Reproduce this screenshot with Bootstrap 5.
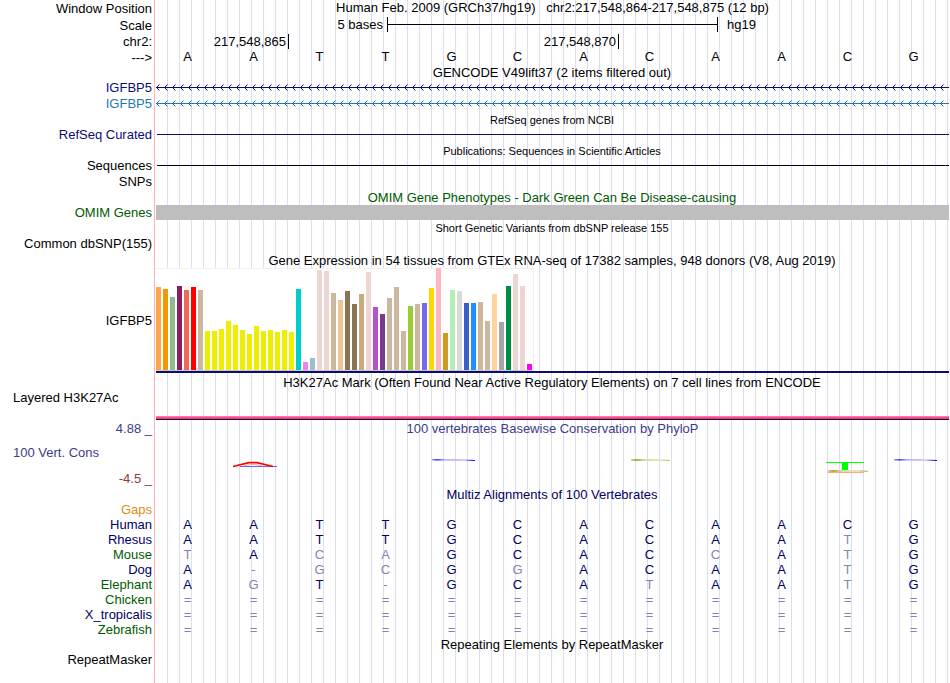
<!DOCTYPE html>
<html lang="en">
<head>
<meta charset="utf-8">
<meta name="viewport" content="width=device-width, initial-scale=1">
<title>Human chr2:217,548,864-217,548,875</title>
<link href="https://cdn.jsdelivr.net/npm/bootstrap@5.3.0/dist/css/bootstrap.min.css" rel="stylesheet">
<style>
  :root { --side: 155px; }
  body { font-family: "Liberation Sans", Arial, sans-serif; font-size: 13px; line-height: 16px; color: #000; background: #fff; }
  .browser {
    min-height: 100vh;
    padding-right: 1px;
    background:
      linear-gradient(#ffb4b4, #ffb4b4) 154px 0 / 1px 100% no-repeat,
      linear-gradient(#fff, #fff) 0 0 / 156px 100% no-repeat,
      repeating-linear-gradient(90deg, #dcdcf8 0 1px, transparent 1px 12px) 155px 0 / calc(100% - 155px) 100% no-repeat;
  }
  .track { display: flex; min-height: 16px; }
  .side { flex: 0 0 var(--side); padding-right: 3px; text-align: right; white-space: nowrap; }
  .side-start { text-align: left; padding-left: 13px; }
  .lane { flex: 1 1 0; min-width: 0; padding-left: 1px; }
  .lane svg { display: block; width: 100%; height: 16px; }
  .lane .logo { height: 50px; }
  .caption { margin-left: var(--side); text-align: center; white-space: nowrap; }
  .h14 { height: 14px; line-height: 14px; min-height: 0; }
  .h15 { height: 15px; line-height: 15px; min-height: 0; }
  .h17 { height: 17px; line-height: 17px; }
  .h18 { height: 18px; line-height: 20px; }
  .note { font-size: 11px; }
  .navy { color: #0c0c78; }
  .azure { color: #1f78b4; }
  .forest { color: #005a00; }
  .indigo { color: #3c3c8c; }
  .maroon { color: #8c3c3c; }
  .deep { color: #000064; }
  .amber { color: #e08a14; }
  .limits { gap: 10px; }
  .rule { height: 1px; margin: 6px 0 0 1px; background: currentColor; }
  .scale-start { width: 232px; padding-right: 4px; text-align: right; }
  .scale-bar { width: 331px; height: 15px; border: solid #000; border-width: 0 1px; background: linear-gradient(#000, #000) 0 7px / 100% 1px no-repeat; }
  .scale-end { padding-left: 9px; }
  .coord { height: 15px; padding-right: 2px; border-right: 1px solid #000; text-align: right; }
  .coord-a { width: 134px; }
  .coord-b { width: 330px; }
  .omim { background: #bebebe; }
  .plot { width: 378px; height: 103px; padding-bottom: 1px; gap: 2px; background: #fff; border-top: 1px solid #f0f0f0; border-right: 1px solid #f0f0f0; box-shadow: inset 0 -1px #c8c8c8; }
  .plot span { width: 5px; flex: none; }
  .gene-line { height: 2px; background: #0c0c78; }
  .acetyl { height: 4px; margin-top: 11px; background: linear-gradient(#ff78be 0 1px, #ff5078 1px 2px, #f04664 2px 3px, #140a50 3px 4px); }
  .bases { table-layout: fixed; width: calc(100% - 2px); border-collapse: collapse; line-height: 15px; }
  .bases th { width: var(--side); padding: 0 3px 0 0; text-align: right; font-weight: 400; height: 15px; }
  .bases td { padding: 0 1px 0 0; text-align: center; color: #000064; }
  .bases .diff { color: #8484b4; }
  .seq td { color: #000; line-height: 14px; vertical-align: top; }
</style>
</head>
<body>
<main class="browser">
  <div class="track h17"><div class="side">Window Position</div><div class="lane text-center h15">Human Feb. 2009 (GRCh37/hg19) &nbsp; chr2:217,548,864-217,548,875 (12 bp)</div></div>
  <div class="track h17"><div class="side">Scale</div>
    <div class="d-flex"><div class="scale-start h15">5 bases</div><div class="scale-bar"></div><div class="scale-end h15">hg19</div></div></div>
  <div class="track"><div class="side">chr2:</div>
    <div class="d-flex"><div class="coord coord-a">217,548,865</div><div class="coord coord-b">217,548,870</div></div></div>
  <table class="bases seq"><tbody><tr><th scope="row">---&gt;</th><td>A</td><td>A</td><td>T</td><td>T</td><td>G</td><td>C</td><td>A</td><td>C</td><td>A</td><td>A</td><td>C</td><td>G</td></tr></tbody></table>

  <div class="caption">GENCODE V49lift37 (2 items filtered out)</div>
  <div class="track"><div class="side h14"><a class="navy text-decoration-none" href="#igfbp5-a">IGFBP5</a></div>
    <div class="lane"><svg id="igfbp5-a" aria-hidden="true"><defs><pattern id="chev" width="8" height="16" patternUnits="userSpaceOnUse"><path d="M3.5 3.5L0.5 6.5L3.5 9.5" fill="none" stroke="#0c0c78"/></pattern></defs><rect width="100%" height="16" fill="url(#chev)"/><rect y="6" width="100%" height="1" fill="#0c0c78"/></svg></div></div>
  <div class="track"><div class="side h14"><a class="azure text-decoration-none" href="#igfbp5-b">IGFBP5</a></div>
    <div class="lane"><svg id="igfbp5-b" aria-hidden="true"><defs><pattern id="chev2" width="8" height="16" patternUnits="userSpaceOnUse"><path d="M3.5 3.5L0.5 6.5L3.5 9.5" fill="none" stroke="#1f78b4"/></pattern></defs><rect width="100%" height="16" fill="url(#chev2)"/><rect y="6" width="100%" height="1" fill="#1f78b4"/></svg></div></div>

  <div class="caption note h15">RefSeq genes from NCBI</div>
  <div class="track navy"><div class="side h14">RefSeq Curated</div><div class="lane"><div class="rule"></div></div></div>
  <div class="caption note h15">Publications: Sequences in Scientific Articles</div>
  <div class="track"><div class="side h14">Sequences</div><div class="lane"><div class="rule"></div></div></div>
  <div class="track"><div class="side h14">SNPs</div></div>

  <div class="caption forest h14">OMIM Gene Phenotypes - Dark Green Can Be Disease-causing</div>
  <div class="track forest h15"><div class="side">OMIM Genes</div><div class="lane"><div class="omim h15"></div></div></div>
  <div class="caption note h17">Short Genetic Variants from dbSNP release 155</div>
  <div class="track"><div class="side h14">Common dbSNP(155)</div></div>

  <div class="caption h15">Gene Expression in 54 tissues from GTEx RNA-seq of 17382 samples, 948 donors (V8, Aug 2019)</div>
  <div class="track"><div class="side align-self-center">IGFBP5</div>
    <div class="lane"><div class="plot d-flex align-items-end" id="gtex" role="img" aria-label="IGFBP5 expression by tissue"></div><div class="gene-line"></div></div></div>

  <div class="caption h18">H3K27Ac Mark (Often Found Near Active Regulatory Elements) on 7 cell lines from ENCODE</div>
  <div class="track h14"><div class="side side-start">Layered H3K27Ac</div></div>
  <div class="track"><div class="side"></div><div class="lane"><div class="acetyl"></div></div></div>

  <div class="track indigo"><div class="side">4.88 _</div><div class="lane text-center">100 vertebrates Basewise Conservation by PhyloP</div></div>
  <div class="track">
    <div class="side limits d-flex flex-column pt-2"><div class="indigo side-start">100 Vert. Cons</div><div class="maroon">-4.5 _</div></div>
    <div class="lane"><svg class="logo" aria-hidden="true">
      <defs>
        <linearGradient id="blueFade"><stop offset="0" stop-color="#a0a0fa"/><stop offset=".12" stop-color="#3c3cff"/><stop offset=".3" stop-color="#b4b4fa"/><stop offset=".75" stop-color="#c8c8fa"/><stop offset="1" stop-color="#00f"/></linearGradient>
        <linearGradient id="oliveFade"><stop offset="0" stop-color="#dcdc96"/><stop offset=".12" stop-color="#aaaa32"/><stop offset=".35" stop-color="#dcdca0"/><stop offset=".75" stop-color="#e6e6be"/><stop offset="1" stop-color="#bebe50"/></linearGradient>
      </defs>
      <path d="M84 29.5H121" stroke="#6464ff"/><path d="M77 29.5L93 25.6H101L117 29.5" fill="none" stroke="red" stroke-width="1.6"/><path d="M88 28.5L97 27.5L106 28.5" fill="none" stroke="#ffa0a0"/>
      <path d="M276 22H302L319 23V24H312L276 23.6Z" fill="url(#blueFade)"/>
      <path d="M475 22H500L514 23V24H475Z" fill="url(#oliveFade)"/>
      <path d="M670 25h38v1h-38zM686 25h6v8h-6z" fill="#0f0"/>
      <path d="M672 33H706L712 34V35H672Z" fill="url(#oliveFade)"/><path d="M672 35.5H708" stroke="#ffa08c"/>
      <path d="M738 22H764L781 23V24H774L738 23.6Z" fill="url(#blueFade)"/>
    </svg></div>
  </div>

  <div class="caption deep h15">Multiz Alignments of 100 Vertebrates</div>
  <table class="bases" aria-label="Multiz alignment"><tbody id="multiz"></tbody></table>
  <div class="caption">Repeating Elements by RepeatMasker</div>
  <div class="track"><div class="side h14">RepeatMasker</div></div>
</main>
<script src="https://cdn.jsdelivr.net/npm/bootstrap@5.3.0/dist/js/bootstrap.bundle.min.js"></script>
<script>
  // Median expression per tissue: [bar height, tissue colour]
  const tan = 'CDB79E', pale = 'EED5D2', brain = 'EEEE00';
  const tissues = [
    [83,'FFA54F'],[81,'EE9A00'],[73,'8FBC8F'],[84,'8B1C62'],[80,'EE6A50'],[83,'FF0000'],[80,tan],
    ...[39,39,41,49,45,40,36,44,39,40,38,40,38].map(h => [h, brain]),
    [81,'00CDCD'],[8,'EE82EE'],[12,'9AC0CD'],[100,pale],[99,pale],[77,tan],[70,'EEC591'],
    [79,'8B7355'],[66,'8B7355'],[76,'CDAA7D'],[98,pale],[63,'B452CD'],[56,'7A378B'],[72,tan],[83,tan],[39,tan],
    [64,'9ACD32'],[66,tan],[67,'7A67EE'],[82,'FFD700'],[102,'FFB6C1'],[37,'CD9B1D'],[80,'B4EEB4'],[79,'D9D9D9'],
    [67,'3A5FCD'],[67,'1E90FF'],[68,tan],[49,tan],[76,'FFD39B'],[48,'A6A6A6'],[84,'008B45'],[96,pale],[84,pale],[6,'FF00FF']
  ];
  document.getElementById('gtex').innerHTML = tissues
    .map(([h, c]) => `<span style="height:${h}px;background:#${c}"></span>`).join('');

  // Lower case marks a base that differs from human
  const species = [
    ['Gaps','amber',''],
    ['Human','deep','AATTGCACAACG'],
    ['Rhesus','deep','AATTGCACAAtG'],
    ['Mouse','forest','tAcaGCACcAtG'],
    ['Dog','deep','A-gcGgACAAtG'],
    ['Elephant','forest','AgT-GCAtAAtG'],
    ['Chicken','forest','============'],
    ['X_tropicalis','deep','============'],
    ['Zebrafish','forest','============']
  ];
  document.getElementById('multiz').innerHTML = species.map(([name, tone, seq]) =>
    `<tr><th scope="row" class="${tone}">${name}</th>` +
    (seq ? [...seq].map(b => `<td${/[A-Z]/.test(b) ? '' : ' class="diff"'}>${b.toUpperCase()}</td>`).join('') : '<td colspan="12"></td>') +
    '</tr>').join('');
</script>
</body>
</html>
